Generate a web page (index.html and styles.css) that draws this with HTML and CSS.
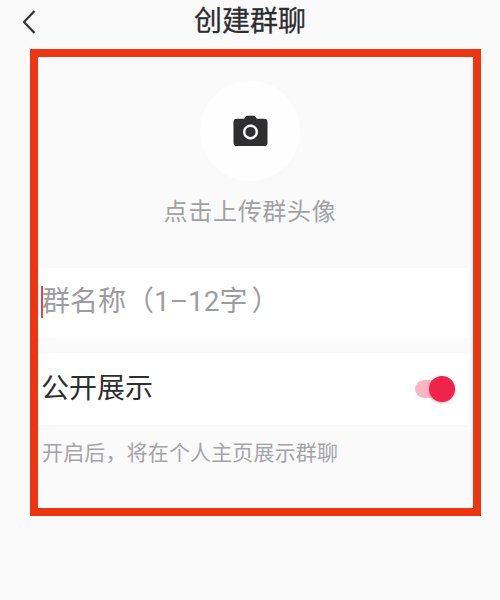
FILE: index.html
```html
<!DOCTYPE html>
<html lang="zh">
<head>
<meta charset="utf-8">
<title>创建群聊</title>
<link rel="stylesheet" href="styles.css">
</head>
<body>
<div class="page">
  <header class="header">
    <svg class="back" width="16" height="26" viewBox="0 0 16 26"><path d="M13.5 2 L3 13 L13.500 24" fill="none" stroke="#333" stroke-width="2.2"/></svg>
    <h1 class="title">创建群聊</h1>
  </header>
  <main class="frame">
    <div class="avatar">
      <svg width="35" height="32" viewBox="0 0 36 32"><path fill-rule="evenodd" fill="#2f2f31" d="M4 3.500h7.500L13 1.200Q13.600 .4 14.600 .4h6.800q1 0 1.600 .8l1.500 2.300H32q3.500 0 3.500 3.500V28q0 3.500-3.500 3.500H4Q.5 31.500 .5 28V7Q.5 3.500 4 3.500ZM18 9.300a7.700 7.700 0 1 0 .01 0ZM18 11.800a5.200 5.200 0 1 1-.01 0Z"/></svg>
    </div>
    <p class="avatar-label">点击上传群头像</p>
    <div class="row name-row">
      <span class="caret"></span>
      <span class="placeholder">群名称（1–12字 ）</span>
    </div>
    <div class="row public-row">
      <span class="public-label">公开展示</span>
      <span class="toggle"><span class="knob"></span></span>
    </div>
    <p class="hint">开启后，将在个人主页展示群聊</p>
  </main>
</div>
</body>
</html>
```

FILE: styles.css
```css
* { box-sizing: border-box; }
html, body { margin: 0; padding: 0; }
body {
  width: 500px;
  height: 600px;
  overflow: hidden;
  background: #fafafb;
  font-family: Roboto, "Noto Sans CJK SC", "Noto Sans", sans-serif;
}
.page { display: flex; flex-direction: column; }
.header {
  position: relative;
  height: 49px;
  display: flex;
  align-items: center;
  justify-content: center;
  padding-bottom: 5px;
}
.back { position: absolute; left: 21px; top: 9px; }
.title {
  margin: 0;
  font-size: 28px;
  font-weight: 400;
  line-height: 40px;
  color: #2e2e30;
  -webkit-text-stroke: 0.3px #2e2e30;
}
.frame {
  width: 451px;
  height: 467px;
  margin-left: 30px;
  border: 8px solid #ee3511;
  padding-right: 5px;
  display: flex;
  flex-direction: column;
  align-items: center;
}
.avatar {
  width: 100px;
  height: 100px;
  margin: 24px 6px 0 0;
  border-radius: 50%;
  background: #fefefe;
  display: flex;
  align-items: center;
  justify-content: center;
}
.avatar-label {
  margin: 14px 6px 0 0;
  font-size: 24px;
  line-height: 34px;
  letter-spacing: 0.7px;
  color: #a2a2a4;
}
.row {
  align-self: stretch;
  display: flex;
  align-items: center;
  background: #fff;
}
.name-row {
  position: relative;
  height: 70px;
  margin-top: 39px;
  padding: 0 0 2px 4px;
}
.caret {
  position: absolute;
  left: 3px;
  top: 18px;
  width: 2px;
  height: 32px;
  background: #e8405a;
}
.placeholder {
  font-size: 28px;
  line-height: 40px;
  color: #9d9d9f;
  white-space: nowrap;
  word-spacing: -3px;
}
.public-row {
  height: 72px;
  margin-top: 15px;
  padding: 0 13px 0 3px;
  justify-content: space-between;
}
.public-label {
  font-size: 28px;
  line-height: 40px;
  color: #2e2e30;
}
.toggle {
  position: relative;
  width: 40px;
  height: 18px;
  border-radius: 9px;
  background: #f9b6c3;
}
.knob {
  position: absolute;
  left: 14px;
  top: -4px;
  width: 26px;
  height: 26px;
  border-radius: 50%;
  background: #f0234c;
  box-shadow: 0 1px 3px rgba(240, 35, 76, .35);
}
.hint {
  align-self: flex-start;
  margin: 13px 0 0 4px;
  font-size: 21px;
  line-height: 30px;
  letter-spacing: 0.15px;
  color: #a5a5a7;
  white-space: nowrap;
}
```
